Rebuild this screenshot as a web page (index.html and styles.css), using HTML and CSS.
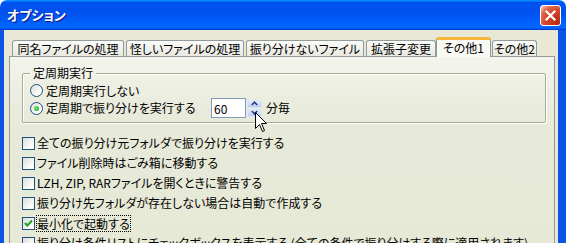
FILE: index.html
```html
<!DOCTYPE html>
<html lang="ja">
<head>
    <meta charset="UTF-8">
    <meta name="viewport" content="width=device-width, initial-scale=1.0">
    <title>オプション</title>
    <link rel="stylesheet" href="styles.css">
</head>
<body>
    <div class="window">
        <div class="titlebar">
            <span class="title">オプション</span>
            <button class="close-btn" aria-label="閉じる">
                <svg width="13" height="13" viewBox="0 0 13 13"><path d="M2.5 2.5 L10.5 10.5 M10.5 2.5 L2.5 10.5" stroke="#fff" stroke-width="2.2" stroke-linecap="square"/></svg>
            </button>
        </div>
        <div class="client">
            <!-- tab strip -->
            <ul class="tabs">
                <li class="tab tab-same">同名ファイルの処理</li>
                <li class="tab tab-suspect">怪しいファイルの処理</li>
                <li class="tab tab-skip">振り分けないファイル</li>
                <li class="tab tab-ext">拡張子変更</li>
                <li class="tab tab-other1 active">その他1</li>
                <li class="tab tab-other2">その他2</li>
            </ul>
            <div class="tab-page">
                <fieldset class="group">
                    <legend>定周期実行</legend>
                    <label class="radio-row row-off"><span class="radio"></span>定周期実行しない</label>
                    <div class="radio-row row-on">
                        <label class="radio-label"><span class="radio checked"></span>定周期で振り分けを実行する</label>
                        <div class="spin">
                            <input class="spin-input" type="text" value="60" readonly>
                            <span class="spin-buttons">
                                <span class="spin-btn"><svg width="7" height="5" viewBox="0 0 7 5"><path d="M0.8 4 L3.5 1.2 L6.2 4" fill="none" stroke="#2B3F74" stroke-width="1.6"/></svg></span>
                                <span class="spin-btn"><svg width="7" height="5" viewBox="0 0 7 5"><path d="M0.8 1 L3.5 3.8 L6.2 1" fill="none" stroke="#2B3F74" stroke-width="1.6"/></svg></span>
                            </span>
                            <svg class="cursor" width="13" height="21" viewBox="0 0 13 21"><path d="M0.5 0.5 V16.5 L4.5 12.5 L7.5 19.5 L9.5 18.5 L6.5 11.5 H11.5 Z" fill="#fff" stroke="#000" stroke-width="1"/></svg>
                        </div>
                        <span class="unit">分毎</span>
                    </div>
                </fieldset>

                <div class="checks">
                    <label class="check-row"><span class="checkbox"></span>全ての振り分け元フォルダで振り分けを実行する</label>
                    <label class="check-row"><span class="checkbox"></span>ファイル削除時はごみ箱に移動する</label>
                    <label class="check-row"><span class="checkbox"></span>LZH, ZIP, RARファイルを開くときに警告する</label>
                    <label class="check-row"><span class="checkbox"></span>振り分け先フォルダが存在しない場合は自動で作成する</label>
                    <label class="check-row">
                        <span class="checkbox checked"><svg width="11" height="11" viewBox="0 0 11 11"><path d="M2 5 L4.3 7.5 L9 2.5" fill="none" stroke="#21A121" stroke-width="2"/></svg></span>
                        <span class="focus">最小化で起動する</span>
                    </label>
                    <label class="check-row"><span class="checkbox"></span>振り分け条件リストにチェックボックスを表示する (全ての条件で振り分けする際に適用されます)</label>
                </div>
            </div>
        </div>
    </div>
</body>
</html>
```

FILE: styles.css
```css
* {
    margin: 0;
    padding: 0;
    box-sizing: border-box;
}
body {
    font-family: "Noto Sans CJK JP", "Noto Sans", sans-serif;
    font-size: 12px;
    line-height: 16px;
    font-feature-settings: "palt";
    color: #000;
    background: #fff;
}
.window {
    width: 566px;
    height: 243px;
    overflow: hidden;
    display: flex;
    flex-direction: column;
}

/* title bar */
.titlebar {
    height: 30px;
    flex: none;
    display: flex;
    align-items: center;
    justify-content: space-between;
    padding: 0 5px 0 7px;
    border-radius: 7px 7px 0 0;
    background: linear-gradient(180deg, #0997ff, #0053ee 8%, #0050ee 40%, #0066ff 88%, #0066ff 93%, #005bff 95%, #003dd7 96%, #003dd7);
}
.title {
    color: #fff;
    font-weight: bold;
    font-size: 13px;
    text-shadow: 1px 1px #0f1089;
}
.close-btn {
    width: 21px;
    height: 21px;
    border: 1px solid #fff;
    border-radius: 3px;
    display: flex;
    align-items: center;
    justify-content: center;
    background: radial-gradient(circle at 90% 90%, #b52a0e 0, #d9472a 55%, #de6a4f 75%, #f4b09c 92%, #fff);
}

/* dialog body */
.client {
    flex: 1;
    display: flex;
    flex-direction: column;
    background: #e9e8d6;
    border-left: 4px solid #0a55e6;
    border-right: 8px solid #0a55e6;
    padding: 7px 3px 0 5px;
}
.tabs {
    list-style: none;
    display: flex;
    align-items: flex-end;
    height: 19px;
    padding-left: 3px;
    position: relative;
    z-index: 1;
}
.tab {
    height: 16px;
    margin-right: 2px;
    border: 1px solid #919b9c;
    border-bottom: none;
    border-radius: 3px 3px 0 0;
    background: linear-gradient(#fbfbf8, #e9e9e1);
    text-align: center;
    line-height: 15px;
    white-space: nowrap;
}
.tab-same { width: 112px; }
.tab-suspect { width: 118px; }
.tab-skip { width: 118px; }
.tab-ext { width: 70px; margin-right: 0; }
.tab-other2 { width: 45px; }
.tab.active {
    width: 55px;
    height: 20px;
    margin-right: 1px;
    margin-bottom: -1px;
    border-top: 3px solid #f9b63a;
    background: #fafaf5;
    line-height: 16px;
}
.tab-page {
    flex: 1;
    border: 1px solid #919b9c;
    background: linear-gradient(#f3f4ec, #e8eada 30%, #e6e9d5);
    padding-top: 8px;
}

/* group box */
.group {
    margin: 0 8px 0 12px;
    padding: 0 7px 4px;
    border: 1px solid #a7ab97;
    border-radius: 2px;
    box-shadow: inset 1px 1px #fff, 1px 1px #fff;
}
.group legend {
    padding: 0 3px;
    line-height: 16px;
}
.radio-row {
    display: flex;
    align-items: center;
}
.row-off {
    height: 15px;
    margin-top: 2px;
}
.row-on {
    height: 20px;
}
.radio-label {
    display: flex;
    align-items: center;
    width: 181px;
}
.radio {
    width: 13px;
    height: 13px;
    margin-right: 3px;
    border: 1px solid #1c5180;
    border-radius: 50%;
    background: linear-gradient(135deg, #dcdcd7, #fff 80%);
    display: flex;
    align-items: center;
    justify-content: center;
}
.radio.checked::after {
    content: "";
    width: 5px;
    height: 5px;
    border-radius: 50%;
    background: radial-gradient(circle at 35% 35%, #6fe46b, #21a121);
}

/* spin control */
.spin {
    position: relative;
    display: flex;
    align-items: center;
}
.spin-input {
    width: 35px;
    height: 20px;
    border: 1px solid #7f9db9;
    padding: 0 2px;
    font: inherit;
    color: #000;
    background: #fff;
    outline: none;
}
.spin-buttons {
    display: flex;
    flex-direction: column;
    gap: 1px;
    margin-left: 1px;
}
.spin-btn {
    width: 15px;
    height: 8px;
    border: 1px solid #dbe5fb;
    border-radius: 2px;
    background: linear-gradient(#e2eafd, #b9cdf6);
    display: flex;
    align-items: center;
    justify-content: center;
}
.cursor {
    position: absolute;
    left: 44px;
    top: 14px;
}
.unit {
    margin-left: 4px;
}

/* check boxes */
.checks {
    margin: 10px 0 0 12px;
}
.check-row {
    display: flex;
    align-items: center;
    height: 20px;
    white-space: nowrap;
}
.checkbox {
    width: 13px;
    height: 13px;
    flex: none;
    margin-right: 2px;
    border: 1px solid #1c5180;
    background: linear-gradient(135deg, #dcdcd7, #fff 80%);
    display: flex;
    align-items: center;
    justify-content: center;
}
.focus {
    outline: 1px dotted #000;
    line-height: 15px;
}
```
